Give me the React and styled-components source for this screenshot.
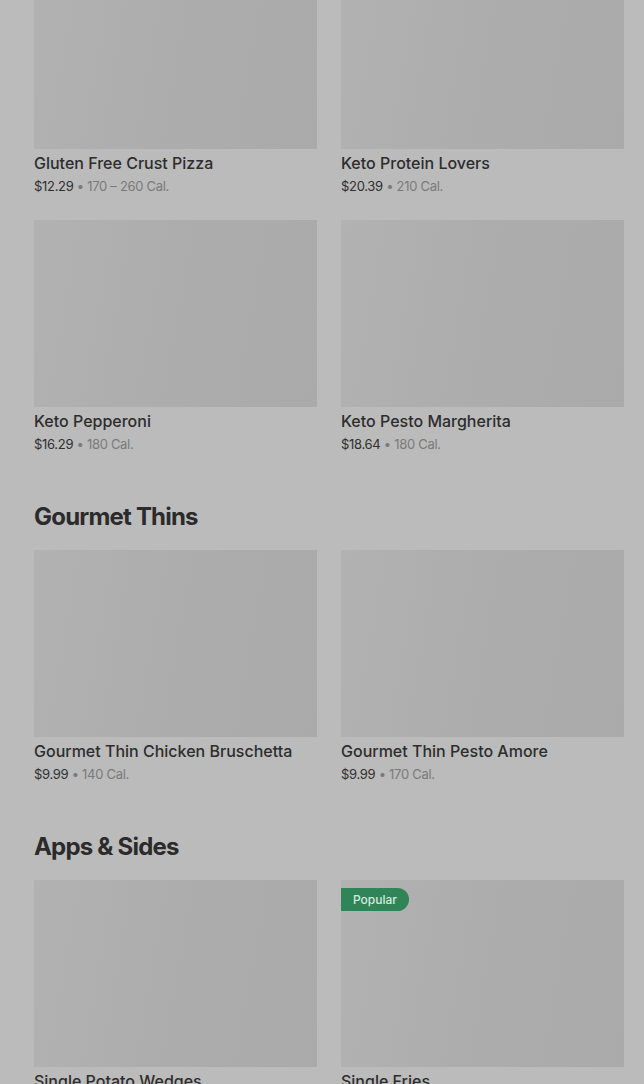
import React from 'react'
import styled, { createGlobalStyle } from 'styled-components'

const GlobalStyle = createGlobalStyle`
  html, body {
    margin: 0;
    padding: 0;
    background: #bbbbbb;
    overflow: hidden;
  }
  body {
    font-family: Inter, "Noto Sans", "Liberation Sans", sans-serif;
    color: #2a2a2a;
  }
`

const Page = styled.main`
  width: 644px;
  height: 1084px;
  overflow: hidden;
  background: #bbbbbb;
`

// the list is scrolled a little, so the first row of images is cut at the top
const Scroller = styled.div`
  margin-top: -38px;
  padding: 0 20px 0 34px;
`

const Section = styled.section`
  & + & {
    padding-top: 47px;
  }
`

const SectionTitle = styled.h2`
  margin: 0 0 17px;
  font-size: 24px;
  line-height: 32px;
  font-weight: 700;
  letter-spacing: -0.8px;
  color: #2b2b2b;
`

const Grid = styled.div`
  display: grid;
  grid-template-columns: 283px 283px;
  column-gap: 24px;
  row-gap: 24px;
`

const Card = styled.article`
  display: flex;
  flex-direction: column;
`

const Thumb = styled.div`
  position: relative;
  height: 187px;
  margin-bottom: 4px;
  background: linear-gradient(100deg, #b2b2b2 0%, #adadad 45%, #aaaaaa 100%);
`

const Badge = styled.span`
  position: absolute;
  top: 8px;
  left: 0;
  height: 23px;
  padding: 0 12px;
  display: flex;
  align-items: center;
  background: #2f8558;
  color: #d9eadf;
  font-size: 12px;
  font-weight: 500;
  border-radius: 0 12px 12px 0;
`

const Name = styled.div`
  font-size: 16px;
  line-height: 20px;
  font-weight: 500;
  color: #2d2d2d;
  letter-spacing: 0;
`

const Meta = styled.div`
  margin-top: 3px;
  font-size: 13px;
  line-height: 20px;
  color: #7a7a7a;
  letter-spacing: -0.3px;
`

const Price = styled.span`
  color: #303030;
`

const sections = [
  {
    title: null,
    items: [
      { name: 'Gluten Free Crust Pizza', price: '$12.29', cal: '170 – 260 Cal.' },
      { name: 'Keto Protein Lovers', price: '$20.39', cal: '210 Cal.' },
      { name: 'Keto Pepperoni', price: '$16.29', cal: '180 Cal.' },
      { name: 'Keto Pesto Margherita', price: '$18.64', cal: '180 Cal.' },
    ],
  },
  {
    title: 'Gourmet Thins',
    items: [
      { name: 'Gourmet Thin Chicken Bruschetta', price: '$9.99', cal: '140 Cal.' },
      { name: 'Gourmet Thin Pesto Amore', price: '$9.99', cal: '170 Cal.' },
    ],
  },
  {
    title: 'Apps & Sides',
    items: [
      { name: 'Single Potato Wedges', price: '$4.99', cal: '390 Cal.' },
      { name: 'Single Fries', price: '$3.99', cal: '320 Cal.', popular: true },
    ],
  },
]

const MenuItem = ({ item }) => (
  <Card>
    <Thumb>{item.popular && <Badge>Popular</Badge>}</Thumb>
    <Name>{item.name}</Name>
    <Meta>
      <Price>{item.price}</Price> • {item.cal}
    </Meta>
  </Card>
)

export default function App() {
  return (
    <Page>
      <GlobalStyle />
      <Scroller>
        {sections.map((s, i) => (
          <Section key={i}>
            {s.title && <SectionTitle>{s.title}</SectionTitle>}
            <Grid>
              {s.items.map((it) => (
                <MenuItem key={it.name} item={it} />
              ))}
            </Grid>
          </Section>
        ))}
      </Scroller>
    </Page>
  )
}
